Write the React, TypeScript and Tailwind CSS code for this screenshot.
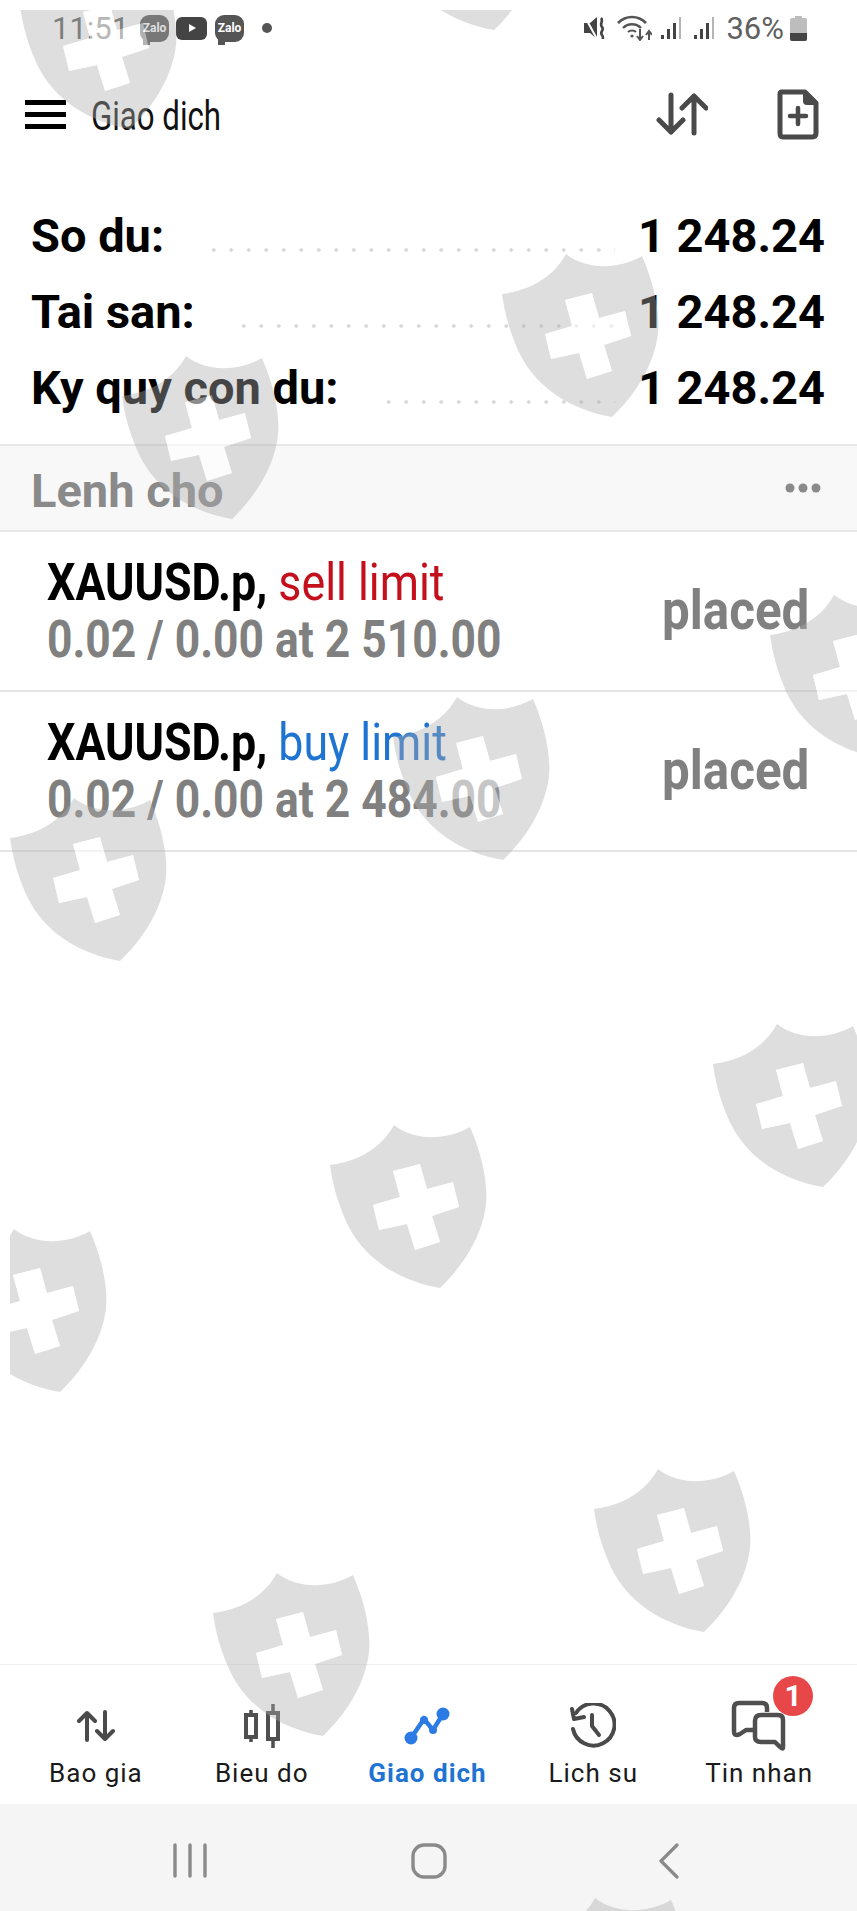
import React from "react";

const SHIELDS: [number, number][] = [
  [0, -60], [364, -159], [482, 228], [102, 330], [750, 569], [373, 671], [-10, 772],
  [693, 998], [310, 1099], [-70, 1203], [574, 1443], [193, 1547], [511, 1872],
];
const CROSS = "M83 72L110 65L117 90L143 83L149 108L122 117L130 143L105 151L97 125L69 131L63 106L90 98Z";
const SHIELD = "M20 66C50 62 72 48 84 26C105 42 135 42 160 28C172 55 178 85 176 105C172 140 150 170 130 189C90 182 50 160 33 115C25 95 22 80 20 66Z";

function Watermark() {
  return (
    <svg className="absolute inset-0 z-10 pointer-events-none" width="857" height="1911" viewBox="0 0 857 1911">
      <defs>
        <clipPath id="wm"><rect x="10" y="10" width="847" height="1901" /></clipPath>
      </defs>
      <g clipPath="url(#wm)">
        {SHIELDS.map(([x, y], i) => (
          <g key={i} transform={`translate(${x} ${y})`}>
            <path d={SHIELD + CROSS} fillRule="evenodd" fill="#adadad" fillOpacity="0.4" />
            <path d={CROSS} fill="#ffffff" fillOpacity="0.55" />
          </g>
        ))}
      </g>
    </svg>
  );
}

function Zalo() {
  return (
    <div className="relative w-[29px] h-[27px] rounded-[9px] bg-[#555555] flex items-center justify-center text-white text-[12px] font-bold leading-none">
      Zalo
      <div className="absolute left-[3px] bottom-[-3px] w-[7px] h-[6px] bg-[#555555]" />
    </div>
  );
}

function StatusBar() {
  return (
    <div className="h-[56px] flex items-center pl-[52px] pr-[50px] text-[#606060]">
      <span className="text-[31px] leading-none w-[88px]">11:51</span>
      <Zalo />
      <div className="ml-[7px] w-[31px] h-[23px] rounded-[6px] bg-[#444444] flex items-center justify-center">
        <svg width="10" height="10" viewBox="0 0 10 10"><path d="M2 1L9 5L2 9Z" fill="#fff" /></svg>
      </div>
      <div className="ml-[8px]"><Zalo /></div>
      <div className="ml-[18px] w-[10px] h-[10px] rounded-full bg-[#555555]" />
      <div className="flex-1" />
      <svg width="24" height="24" viewBox="0 0 24 24" fill="none">
        <path d="M1 7H7L14 1V23L7 17H1Z" fill="#444" />
        <path d="M2 1L14 23" stroke="#fff" strokeWidth="2" />
        <path d="M18 2C21 5 16 8 19 11C22 14 16 16 19 19C20 20 20 22 20 23" stroke="#444" strokeWidth="2.6" />
      </svg>
      <svg className="ml-[10px]" width="35" height="26" viewBox="0 0 35 26" fill="none" stroke="#555">
        <path d="M1 8C9 0 21 0 29 8" strokeWidth="2.6" />
        <path d="M6 13C11 8 19 8 24 13" strokeWidth="2.4" />
        <path d="M11 17C13 15 17 15 19 17" strokeWidth="2.2" />
        <circle cx="15" cy="21" r="1.6" fill="#555" stroke="none" />
        <path d="M23 14V24M20 21L23 25L26 21" strokeWidth="2" />
        <path d="M32 25V17M29 20L32 16L35 20" strokeWidth="2" />
      </svg>
      <svg className="ml-[8px]" width="22" height="24" viewBox="0 0 22 24">
        <rect x="1" y="19" width="3" height="4" fill="#444" /><rect x="7" y="13" width="3" height="10" fill="#444" />
        <rect x="13" y="7" width="3" height="16" fill="#444" /><rect x="19" y="1" width="2" height="22" fill="#b5b5b5" />
      </svg>
      <svg className="ml-[11px]" width="22" height="24" viewBox="0 0 22 24">
        <rect x="1" y="19" width="3" height="4" fill="#444" /><rect x="7" y="13" width="3" height="10" fill="#444" />
        <rect x="13" y="7" width="3" height="16" fill="#444" /><rect x="19" y="1" width="2" height="22" fill="#b5b5b5" />
      </svg>
      <span className="ml-[11px] text-[31px] leading-none">36%</span>
      <svg className="ml-[6px]" width="17" height="25" viewBox="0 0 17 25">
        <path d="M5 0H12V2H15Q17 2 17 4V23Q17 25 15 25H2Q0 25 0 23V4Q0 2 2 2H5Z" fill="#bdbdbd" />
        <path d="M0 17H17V23Q17 25 15 25H2Q0 25 0 23Z" fill="#444" />
      </svg>
    </div>
  );
}

function Header() {
  return (
    <div className="h-[116px] flex items-center pl-[25px] pr-[38px]">
      <svg width="41" height="29" viewBox="0 0 41 29" fill="#000">
        <rect width="41" height="5" /><rect y="12" width="41" height="5" /><rect y="24" width="41" height="5" />
      </svg>
      <span className="ml-[25px] pt-[5px] text-[40px] leading-none text-[#111111] origin-left scale-x-[0.78] whitespace-nowrap">Giao dich</span>
      <div className="flex-1" />
      <svg width="52" height="44" viewBox="0 0 52 44" fill="none" stroke="#4a4a4a" strokeWidth="5" strokeLinecap="round" strokeLinejoin="round">
        <path d="M15 3V40M3 28L15 40L27 28" />
        <path d="M38 41V4M26 16L38 4L50 16" />
      </svg>
      <svg className="ml-[69px]" width="42" height="51" viewBox="0 0 42 51" fill="none">
        <path d="M4 3H28L39 14V44Q39 48 35 48H6Q3 48 3 44V5Q3 3 5 3Z" stroke="#4a4a4a" strokeWidth="5" strokeLinejoin="round" />
        <path d="M26 3L39 16H30Q26 16 26 12Z" fill="#4a4a4a" />
        <path d="M21 19V35M13 27H29" stroke="#4a4a4a" strokeWidth="4.5" strokeLinecap="round" />
      </svg>
    </div>
  );
}

function SummaryRow({ label, dotsLeft }: { label: string; dotsLeft: string }) {
  return (
    <div className="h-[76px] relative flex items-center justify-between pl-[31px] pr-[32px] text-[47px] leading-none font-bold text-black">
      <span className="whitespace-nowrap">{label}</span>
      <div className={`absolute right-[242px] top-[51px] h-[4px] bg-[radial-gradient(circle,#d8d8d8_1.5px,transparent_2px)] bg-[length:17.5px_4px] ${dotsLeft}`} />
      <span className="whitespace-nowrap">1 248.24</span>
    </div>
  );
}

function OrderRow({ side, sideClass, sub }: { side: string; sideClass: string; sub: string }) {
  return (
    <div className="h-[160px] border-b-[2px] border-[#e4e4e4] flex items-center justify-between pl-[47px] pr-[48px]">
      <div className="flex flex-col origin-left scale-x-[0.86] whitespace-nowrap">
        <div className="text-[52px] leading-[57px] font-bold text-black">
          XAUUSD.p, <span className={`font-normal ${sideClass}`}>{side}</span>
        </div>
        <div className="text-[51.6px] leading-[57px] font-bold text-[#808080]">{sub}</div>
      </div>
      <span className="text-[56px] leading-none font-bold text-[#808080] origin-right scale-x-[0.88] pb-[2px]">placed</span>
    </div>
  );
}

function Tab({ label, active, children }: { label: string; active?: boolean; children: React.ReactNode }) {
  return (
    <div className="relative flex flex-col items-center">
      <div className="h-[60px] mt-[31px] flex items-center justify-center">{children}</div>
      <span className={`mt-[2px] text-[26px] leading-[30px] tracking-[1px] whitespace-nowrap ${active ? "text-[#1f74d2] font-bold" : "text-[#1a1a1a]"}`}>
        {label}
      </span>
    </div>
  );
}

function TabBar() {
  return (
    <div className="h-[140px] border-t-[1px] border-[#f0f0f0] grid grid-cols-5 pl-[13px] pr-[15px]">
      <Tab label="Bao gia">
        <svg width="38" height="32" viewBox="0 0 38 32" fill="none" stroke="#4a4a4a" strokeWidth="4" strokeLinecap="round" strokeLinejoin="round">
          <path d="M10 30V3M2 11L10 3L18 11" />
          <path d="M28 2V29M20 21L28 29L36 21" />
        </svg>
      </Tab>
      <Tab label="Bieu do">
        <svg width="36" height="44" viewBox="0 0 36 44" fill="none" stroke="#4f4f4f">
          <path d="M7 6V38M29 0V44" strokeWidth="3.5" />
          <rect x="2" y="11" width="10" height="22" fill="#fff" strokeWidth="4" />
          <rect x="24" y="9" width="10" height="26" fill="#fff" strokeWidth="4" />
        </svg>
      </Tab>
      <Tab label="Giao dich" active>
        <svg width="46" height="38" viewBox="0 0 46 38" fill="none">
          <path d="M7 31L20 12L29 23L39 7" stroke="#2c7be5" strokeWidth="4.5" />
          <circle cx="7" cy="31" r="6.5" fill="#2c7be5" /><circle cx="20" cy="13" r="4" fill="#2c7be5" />
          <circle cx="29" cy="23" r="4" fill="#2c7be5" /><circle cx="39" cy="7" r="6.5" fill="#2c7be5" />
        </svg>
      </Tab>
      <Tab label="Lich su">
        <svg width="46" height="46" viewBox="0 0 46 46" fill="none" stroke="#4a4a4a" strokeWidth="4" strokeLinecap="round" strokeLinejoin="round">
          <path d="M6 10A21 21 0 1 1 3 26" />
          <path d="M2 6L4 16L14 14" />
          <path d="M22 12V23L29 32" />
        </svg>
      </Tab>
      <Tab label="Tin nhan">
        <svg width="56" height="52" viewBox="0 0 56 52" fill="none" stroke="#4f4f4f" strokeWidth="4.5" strokeLinejoin="round">
          <path d="M36 12V8Q36 3 31 3H8Q3 3 3 8V31Q3 37 9 34L15 30H22" />
          <path d="M30 15H47Q52 15 52 20V47Q52 50 49 47L44 42H30Q24 42 24 37V21Q24 15 30 15Z" />
        </svg>
        <div className="absolute left-[97px] top-[11px] w-[40px] h-[40px] rounded-full bg-[#e8474a] text-white text-[30px] font-bold flex items-center justify-center leading-none">1</div>
      </Tab>
    </div>
  );
}

function NavBar() {
  return (
    <div className="h-[107px] bg-[#f5f5f5] flex items-start pt-[39px] pl-[173px]">
      <svg width="34" height="35" viewBox="0 0 34 35" stroke="#8a8a8a" strokeWidth="3.4" strokeLinecap="round">
        <path d="M2 2V33M17 2V33M32 2V33" />
      </svg>
      <svg className="ml-[204px]" width="36" height="36" viewBox="0 0 36 36" fill="none" stroke="#8a8a8a" strokeWidth="3.4">
        <rect x="2" y="2" width="32" height="32" rx="11" />
      </svg>
      <svg className="ml-[211px]" width="22" height="36" viewBox="0 0 22 36" fill="none" stroke="#8a8a8a" strokeWidth="3.2" strokeLinecap="round" strokeLinejoin="round">
        <path d="M19 2L3 18L19 34" />
      </svg>
    </div>
  );
}

export default function App() {
  return (
    <div className="relative w-[857px] h-[1911px] bg-white overflow-hidden flex flex-col font-['Roboto',sans-serif]">
      <StatusBar />
      <Header />
      <div className="pt-[25px] pb-[19px]">
        <SummaryRow label="So du:" dotsLeft="left-[205px]" />
        <SummaryRow label="Tai san:" dotsLeft="left-[235px]" />
        <SummaryRow label="Ky quy con du:" dotsLeft="left-[380px]" />
      </div>
      <div className="h-[88px] bg-[#f8f8f8] border-y-[2px] border-[#e8e8e8] flex items-center justify-between pl-[31px] pr-[36px]">
        <span className="text-[47px] leading-none font-bold text-[#8a8a8a] pt-[4px]">Lenh cho</span>
        <svg width="36" height="12" viewBox="0 0 36 12" fill="#8a8a8a"><circle cx="5" cy="6" r="4.5" /><circle cx="18" cy="6" r="4.5" /><circle cx="31" cy="6" r="4.5" /></svg>
      </div>
      <OrderRow side="sell limit" sideClass="text-[#c40f1c]" sub="0.02 / 0.00 at 2 510.00" />
      <OrderRow side="buy limit" sideClass="text-[#1f74d2]" sub="0.02 / 0.00 at 2 484.00" />
      <div className="flex-1" />
      <TabBar />
      <NavBar />
      <Watermark />
    </div>
  );
}
